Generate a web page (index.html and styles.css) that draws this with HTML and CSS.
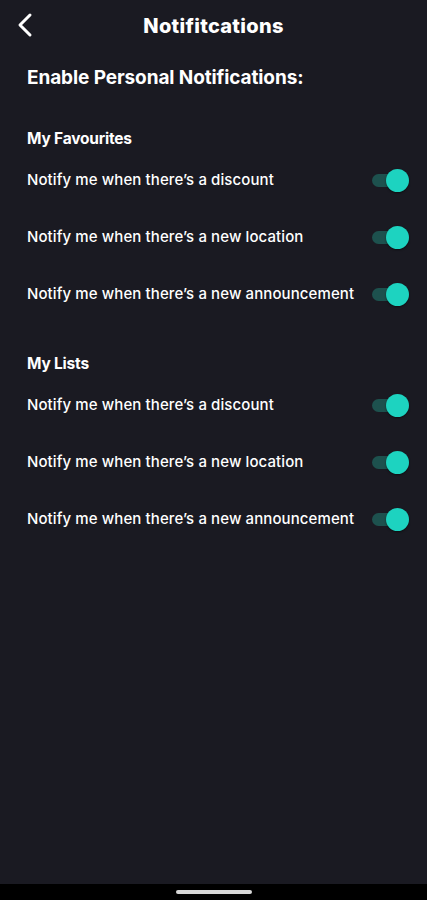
FILE: index.html
```html
<!DOCTYPE html>
<html>
<head>
<meta charset="utf-8">
<link rel="stylesheet" href="styles.css">
</head>
<body>
<div class="screen">
  <header class="topbar">
    <svg class="back" width="18" height="26" viewBox="0 0 18 26"><path d="M14 3 L4 13 L14 23" fill="none" stroke="#fff" stroke-width="3" stroke-linecap="round" stroke-linejoin="round"/></svg>
    <h1 class="title">Notifitcations</h1>
  </header>
  <main class="content">
    <h2 class="heading">Enable Personal Notifications:</h2>
    <section class="group">
      <h3 class="group-title">My Favourites</h3>
      <div class="row"><span class="label">Notify me when there’s a discount</span><span class="toggle"><span class="track"></span><span class="thumb"></span></span></div>
      <div class="row"><span class="label">Notify me when there’s a new location</span><span class="toggle"><span class="track"></span><span class="thumb"></span></span></div>
      <div class="row"><span class="label">Notify me when there’s a new announcement</span><span class="toggle"><span class="track"></span><span class="thumb"></span></span></div>
    </section>
    <section class="group">
      <h3 class="group-title">My Lists</h3>
      <div class="row"><span class="label">Notify me when there’s a discount</span><span class="toggle"><span class="track"></span><span class="thumb"></span></span></div>
      <div class="row"><span class="label">Notify me when there’s a new location</span><span class="toggle"><span class="track"></span><span class="thumb"></span></span></div>
      <div class="row"><span class="label">Notify me when there’s a new announcement</span><span class="toggle"><span class="track"></span><span class="thumb"></span></span></div>
    </section>
  </main>
  <footer class="navbar"><span class="handle"></span></footer>
</div>
</body>
</html>
```
FILE: styles.css
```css
* { box-sizing: border-box; margin: 0; padding: 0; }
html, body { width: 427px; height: 900px; background: #1a1a22; }
body { font-family: Inter, "Noto Sans", sans-serif; color: #fff; }
.screen { display: flex; flex-direction: column; height: 900px; }
.topbar { position: relative; height: 52px; display: flex; align-items: center; justify-content: center; }
.back { position: absolute; left: 16px; top: 12px; }
.title { font-size: 20px; font-weight: 800; letter-spacing: 0.3px; line-height: 26px; }
.content { flex: 1; padding: 14px 18px 0 27px; }
.heading { font-size: 19px; font-weight: 700; line-height: 24px; letter-spacing: -0.1px; }
.group { margin-top: 39px; }
.group + .group { margin-top: 31.5px; }
.group-title { font-size: 15.5px; font-weight: 700; line-height: 20px; letter-spacing: -0.2px; }
.row { display: flex; align-items: center; justify-content: space-between; height: 57px; }
.group-title + .row { margin-top: 2.5px; }
.label { font-size: 15px; font-weight: 500; line-height: 20px; letter-spacing: 0.1px; }
.toggle { position: relative; width: 37px; height: 23px; display: block; }
.track { position: absolute; left: 0; top: 5px; width: 30px; height: 13px; border-radius: 7px; background: #1d514e; }
.thumb { position: absolute; right: 0; top: 0; width: 23px; height: 23px; border-radius: 50%; background: #1dd3c0; box-shadow: 0 1px 2px rgba(0,0,0,0.5); }
.navbar { height: 16px; background: #000; display: flex; justify-content: center; align-items: center; }
.handle { width: 76px; height: 4px; border-radius: 2px; background: #d8d8d8; }
```
